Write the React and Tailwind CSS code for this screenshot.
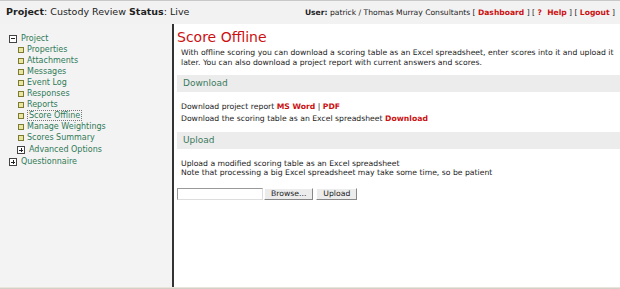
const navItems = [
  'Properties',
  'Attachments',
  'Messages',
  'Event Log',
  'Responses',
  'Reports',
  'Score Offline',
  'Manage Weightings',
  'Scores Summary',
]

function Toggle({ open }) {
  return (
    <span className="inline-flex w-[8px] h-[8px] border border-[#444] bg-white items-center justify-center relative shrink-0">
      <span className="absolute w-[4px] h-px bg-[#222]" />
      {!open && <span className="absolute w-px h-[4px] bg-[#222]" />}
    </span>
  )
}

function Leaf() {
  return <span className="inline-block w-[6px] h-[6px] border border-[#7a7a30] bg-[#e8e6a0] shrink-0" />
}

function SectionBar({ children }) {
  return (
    <div className="bg-[#ececec] h-[17px] flex items-center pl-[6px] text-[9px] text-[#3b7a5c]">{children}</div>
  )
}

export default function App() {
  return (
    <div className="w-[620px] h-[289px] flex flex-col overflow-hidden font-['DejaVu_Sans',sans-serif] bg-white">
      <div className="h-[24px] shrink-0 bg-[#f2f2f2] border-t border-[#c8c8c8] flex items-center justify-between pl-[6px] pr-[5px]">
        <div className="text-[9.5px] text-[#222]">
          <b>Project</b>: Custody Review <b>Status</b>: Live
        </div>
        <div className="text-[7.6px] text-[#222]">
          <b>User:</b> patrick / Thomas Murray Consultants [ <b className="text-[#cc1111]">Dashboard</b> ] [{' '}
          <b className="text-[#cc1111]">? &nbsp;Help</b> ] [ <b className="text-[#cc1111]">Logout</b> ]
        </div>
      </div>
      <div className="flex flex-1 min-h-0">
        <div className="w-[174px] shrink-0 bg-[#f3f3f3] border-r-2 border-[#333] pt-[9px] pl-[9px] text-[8px] text-[#2f7a57]">
          <div className="flex items-center gap-[4px] h-[11px]">
            <Toggle open />
            <span>Project</span>
          </div>
          <div className="pl-[9px]">
            {navItems.map((item) => (
              <div key={item} className="flex items-center gap-[3px] h-[11px]">
                <Leaf />
                <span className={item === 'Score Offline' ? 'border border-dotted border-[#777] px-px leading-[9px]' : ''}>{item}</span>
              </div>
            ))}
            <div className="flex items-center gap-[4px] h-[12px] mt-[1px] -ml-[1px]">
              <Toggle />
              <span>Advanced Options</span>
            </div>
          </div>
          <div className="flex items-center gap-[4px] h-[12px]">
            <Toggle />
            <span>Questionnaire</span>
          </div>
        </div>
        <div className="flex-1 pl-[3px] pt-[3px] text-[7.7px] text-[#222]">
          <h1 className="text-[14px] leading-[20px] text-[#cc1111]">Score Offline</h1>
          <p className="pl-[4px] mt-[1px] leading-[10px] pr-[3px]">
            With offline scoring you can download a scoring table as an Excel spreadsheet, enter scores into it and upload it later. You can also download a project report with current answers and scores.
          </p>
          <div className="mt-[7px]">
            <SectionBar>Download</SectionBar>
          </div>
          <div className="pl-[4px] pt-[9px] leading-[12px]">
            <div>
              Download project report <b className="text-[#cc1111]">MS Word</b> | <b className="text-[#cc1111]">PDF</b>
            </div>
            <div>
              Download the scoring table as an Excel spreadsheet <b className="text-[#cc1111]">Download</b>
            </div>
          </div>
          <div className="mt-[7px]">
            <SectionBar>Upload</SectionBar>
          </div>
          <div className="pl-[4px] pt-[10px] leading-[9px]">
            <div>Upload a modified scoring table as an Excel spreadsheet</div>
            <div>Note that processing a big Excel spreadsheet may take some time, so be patient</div>
          </div>
          <div className="flex items-center mt-[11px] h-[12px]">
            <div className="w-[86px] h-[12px] border border-[#999] border-r-[#ddd] border-b-[#ddd] bg-white" />
            <button className="ml-[1px] h-[12px] px-[6px] text-[7.7px] bg-[#ececec] border border-[#fff] border-r-[#888] border-b-[#888] leading-none">Browse...</button>
            <button className="ml-[3px] h-[12px] px-[6px] text-[7.7px] bg-[#ececec] border border-[#fff] border-r-[#888] border-b-[#888] leading-none">Upload</button>
          </div>
        </div>
      </div>
      <div className="h-[2px] shrink-0 bg-[#d4d0c8] border-t border-[#e8e4dc]" />
    </div>
  )
}
